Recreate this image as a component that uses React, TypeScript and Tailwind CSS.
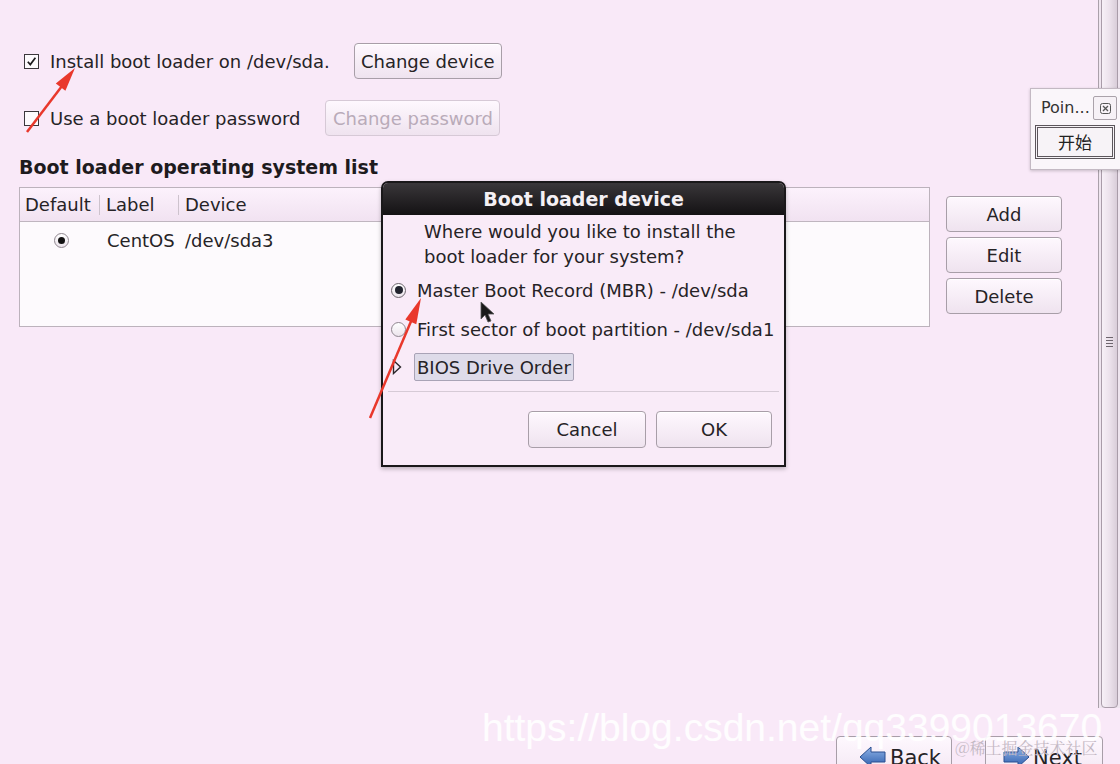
import React from 'react';

const font = "font-['DejaVu_Sans',sans-serif]";

const Btn = ({
  children,
  className = '',
  disabled = false,
}: {
  children: React.ReactNode;
  className?: string;
  disabled?: boolean;
}) => (
  <div
    className={`flex items-center justify-center rounded-[4px] border bg-linear-to-b from-[#fef8fe] to-[#efe3ef] text-[18px] ${
      disabled ? 'border-[#d6c9d6] text-[#b9abb9]' : 'border-[#a89ea8] text-[#262326] shadow-[inset_0_1px_0_#fff]'
    } ${className}`}
  >
    {children}
  </div>
);

const CheckBox = ({ checked }: { checked?: boolean }) => (
  <div className="flex h-[15px] w-[15px] items-center justify-center border border-[#3c373c] bg-[#fdfafd]">
    {checked && (
      <svg width="11" height="11" viewBox="0 0 11 11">
        <path d="M1.8 5.8 L4.3 8.6 L9.4 1.8" fill="none" stroke="#1c1a1c" strokeWidth="1.7" />
      </svg>
    )}
  </div>
);

const Radio = ({ checked, dark }: { checked?: boolean; dark?: boolean }) => (
  <div
    className={`flex h-[15px] w-[15px] items-center justify-center rounded-full border ${
      dark ? 'border-[#6c656c]' : 'border-[#8f868f]'
    } bg-linear-to-b from-[#ffffff] to-[#ece4ec]`}
  >
    {checked && <div className={`rounded-full ${dark ? 'h-[8px] w-[8px] bg-[#22232e]' : 'h-[7px] w-[7px] bg-[#111]'}`} />}
  </div>
);

const Scrollbar = () => (
  <div className="relative h-full w-[22px] border-l border-[#aaa0aa] bg-[#efe5ef]">
    <div className="absolute left-[2px] top-[-6px] flex h-[714px] w-[17px] items-center justify-center rounded-b-[4px] border border-[#a99ca9] bg-linear-to-r from-[#f7f0f7] via-[#ece2ec] to-[#d9cdd9] pb-[18px]">
      <div className="flex flex-col gap-[2px]">
        <div className="h-px w-[7px] bg-[#6e666e]" />
        <div className="h-px w-[7px] bg-[#6e666e]" />
        <div className="h-px w-[7px] bg-[#6e666e]" />
        <div className="h-px w-[7px] bg-[#6e666e]" />
      </div>
    </div>
  </div>
);

const NavArrow = ({ left }: { left?: boolean }) => (
  <svg width="28" height="22" viewBox="0 0 28 22" className={left ? '' : 'scale-x-[-1]'}>
    <defs>
      <linearGradient id={left ? 'ga' : 'gb'} x1="0" y1="0" x2="0" y2="1">
        <stop offset="0" stopColor="#8fb2e6" />
        <stop offset="1" stopColor="#2f5fae" />
      </linearGradient>
    </defs>
    <path d="M1 11 L12 1 L12 6 L26 6 L26 16 L12 16 L12 21 Z" fill={`url(#${left ? 'ga' : 'gb'})`} stroke="#2a4f90" strokeWidth="1" />
  </svg>
);

export default function App() {
  return (
    <div className={`relative flex h-[764px] w-[1120px] flex-col overflow-hidden bg-[#f9e9f8] text-[#262326] ${font}`}>
      {/* main area + scrollbar */}
      <div className="flex h-[708px] shrink-0">
        <div className="flex flex-1 flex-col pl-[19px] pt-[43px]">
          <div className="flex h-[36px] items-center pl-[5px]">
            <CheckBox checked />
            <span className="ml-[11px] text-[18px]">Install boot loader on /dev/sda.</span>
            <Btn className="ml-[24px] h-[36px] w-[148px]">Change device</Btn>
          </div>
          <div className="mt-[21px] flex h-[36px] items-center pl-[5px]">
            <CheckBox />
            <span className="ml-[11px] text-[18px]">Use a boot loader password</span>
            <Btn disabled className="ml-[25px] h-[36px] w-[175px]">
              Change password
            </Btn>
          </div>
          <h2 className="mt-[20px] text-[19px] font-bold leading-[22px] text-[#1e1b1e]">
            Boot loader operating system list
          </h2>
          <div className="mt-[9px] flex">
            <div className="h-[140px] w-[911px] border border-[#bcb2bc] bg-[#fdfafd]">
              <div className="flex h-[34px] items-center border-b border-[#bfb5bf] bg-linear-to-b from-[#fcf2fc] to-[#f1e2f1] text-[18px]">
                <span className="w-[79px] pl-[5px]">Default</span>
                <div className="h-[20px] w-px bg-[#cdc3cd]" />
                <span className="w-[78px] pl-[6px]">Label</span>
                <div className="h-[20px] w-px bg-[#cdc3cd]" />
                <span className="pl-[6px]">Device</span>
              </div>
              <div className="flex h-[36px] items-center text-[18px]">
                <div className="flex w-[80px] justify-center pl-[3px]">
                  <Radio checked />
                </div>
                <span className="w-[79px] pl-[7px]">CentOS</span>
                <span className="pl-[6px]">/dev/sda3</span>
              </div>
            </div>
            <div className="ml-[16px] flex w-[116px] flex-col gap-[5px] pt-[9px]">
              <Btn className="h-[36px]">Add</Btn>
              <Btn className="h-[36px]">Edit</Btn>
              <Btn className="h-[36px]">Delete</Btn>
            </div>
          </div>
        </div>
        <Scrollbar />
      </div>

      {/* bottom navigation */}
      <div className="flex flex-1 gap-[33px] pl-[836px] pt-[28px]">
        <div className="flex h-[40px] w-[116px] items-start gap-[3px] rounded-t-[4px] border border-[#a89ea8] bg-linear-to-b from-[#fef8fe] to-[#f3e7f3] pl-[22px] pt-[9px]">
          <NavArrow left />
          <span className="text-[21px] leading-[24px]">Back</span>
        </div>
        <div className="flex h-[40px] w-[118px] items-start gap-[3px] rounded-t-[4px] border border-[#a89ea8] bg-linear-to-b from-[#fef8fe] to-[#f3e7f3] pl-[16px] pt-[9px]">
          <NavArrow />
          <span className="text-[21px] leading-[24px]">Next</span>
        </div>
      </div>

      {/* dialog */}
      <div className="absolute left-[381px] top-[181px] flex h-[286px] w-[405px] flex-col overflow-hidden rounded-t-[7px] border-2 border-[#1a181a] bg-[#f9ebf8] shadow-[0_2px_4px_rgba(0,0,0,0.25)]">
        <div className="flex h-[32px] shrink-0 items-center justify-center bg-linear-to-b from-[#3a373a] to-[#141214] text-[19px] font-bold text-[#f4f0f4]">
          Boot loader device
        </div>
        <div className="flex flex-1 flex-col">
          <p className="pl-[41px] pt-[4px] text-[18px] leading-[25px]">
            Where would you like to install the
            <br />
            boot loader for your system?
          </p>
          <div className="mt-[9px] flex h-[24px] items-center pl-[8px]">
            <Radio checked dark />
            <span className="ml-[11px] text-[18px]">Master Boot Record (MBR) - /dev/sda</span>
          </div>
          <div className="mt-[15px] flex h-[24px] items-center pl-[8px]">
            <Radio />
            <span className="ml-[11px] text-[18px]">First sector of boot partition - /dev/sda1</span>
          </div>
          <div className="mt-[12px] flex h-[28px] items-center pl-[9px]">
            <svg width="10" height="16" viewBox="0 0 10 16">
              <path d="M1.5 1.5 L8.5 8 L1.5 14.5 Z" fill="none" stroke="#2b272b" strokeWidth="1.4" />
            </svg>
            <div className="ml-[12px] flex h-[28px] w-[160px] items-center rounded-[2px] border border-[#a9a3b6] bg-[#dedbe9] pl-[2px] text-[18px]">
              BIOS Drive Order
            </div>
          </div>
          <div className="mx-[5px] mt-[10px] h-px bg-[#d6cad6]" />
          <div className="mt-[19px] flex justify-end gap-[10px] pr-[12px]">
            <Btn className="h-[37px] w-[118px]">Cancel</Btn>
            <Btn className="h-[37px] w-[116px]">OK</Btn>
          </div>
        </div>
      </div>

      {/* small floating window */}
      <div className="absolute left-[1030px] top-[88px] h-[82px] w-[96px] border border-[#c3b9c3] bg-[#faf6fa] shadow-[0_1px_3px_rgba(0,0,0,0.2)]">
        <div className="flex h-[36px] w-[86px] items-center justify-between pl-[10px] pt-[2px]">
          <span className="text-[16px] text-[#333]">Poin...</span>
          <div className="flex h-[24px] w-[24px] items-center justify-center rounded-[2px] border border-[#aaa2aa] bg-[#f6f1f6]">
            <svg width="11" height="11" viewBox="0 0 11 11">
              <rect x="0.5" y="0.5" width="10" height="10" rx="2" fill="none" stroke="#555" strokeWidth="1" />
              <path d="M3 3 L8 8 M8 3 L3 8" stroke="#555" strokeWidth="1.3" />
            </svg>
          </div>
        </div>
        <div className="ml-[4px] flex h-[34px] w-[80px] items-center justify-center border-[3px] border-double border-[#5c565c] bg-[#f7f3f7] text-[17px] font-['Noto_Sans_CJK_SC',sans-serif] text-[#222]">
          开始
        </div>
      </div>

      {/* watermarks */}
      <div className="absolute left-[482px] top-[704px] whitespace-nowrap font-['Liberation_Sans',sans-serif] text-[39px] leading-[48px] text-white/90">
        https://blog.csdn.net/qq3399013670
      </div>
      <div className="absolute left-[955px] top-[737px] whitespace-nowrap font-['Noto_Serif_CJK_SC','Noto_Sans_CJK_SC',serif] text-[16px] leading-[22px] text-[#c4b9c4]">
        @稀土掘金技术社区
      </div>

      {/* red annotation arrows and mouse pointer */}
      <svg className="pointer-events-none absolute left-0 top-0" width="1120" height="764">
        <line x1="27" y1="132" x2="62" y2="86" stroke="#e9382c" strokeWidth="2.5" />
        <polygon points="75,68 65.4,90.8 55.8,83.6" fill="#e9382c" />
        <line x1="370" y1="418" x2="412" y2="319" stroke="#e9382c" strokeWidth="2.5" />
        <polygon points="421,298 416.3,324.2 405.3,319.6" fill="#e9382c" />
        <path d="M481 302 L481 319 L485 315 L488 322 L491 321 L488 314 L494 314 Z" fill="#1a1a1a" stroke="#555" strokeWidth="0.8" />
      </svg>
    </div>
  );
}
